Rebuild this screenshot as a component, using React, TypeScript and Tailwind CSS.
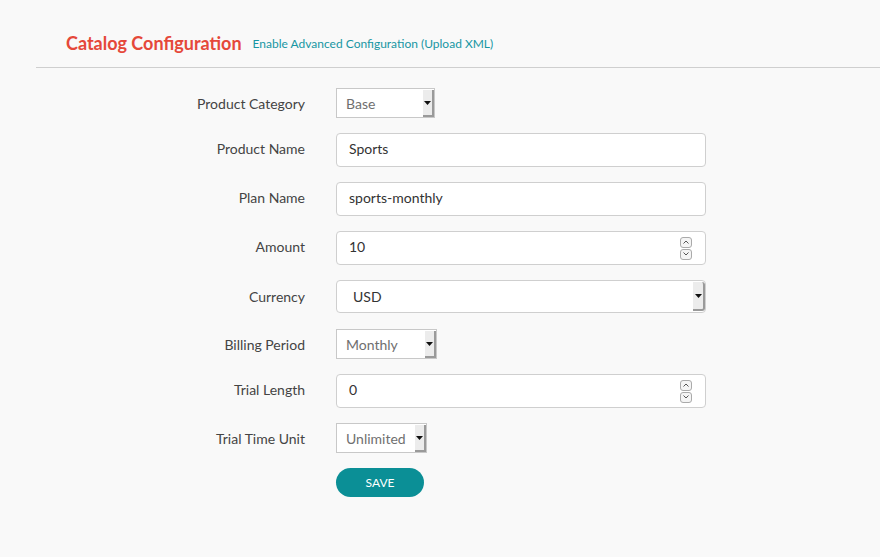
import React from 'react';

const Caret = () => (
  <svg width="7" height="4" viewBox="0 0 7 4" className="block">
    <path d="M0 0 L7 0 L3.5 4 Z" fill="#111" />
  </svg>
);

const SelectBox: React.FC<{ value: string; width: string }> = ({ value, width }) => (
  <div className={`flex h-[30px] ${width} items-stretch border border-[#c8c8c8] bg-white`}>
    <div className="flex flex-1 items-center pl-[9px] text-[14px] text-[#6f6f6f]">{value}</div>
    <div className="flex w-[11px] items-center justify-center border-r-2 border-b-2 border-[#9a9a9a] bg-[#ececec] mt-[1px]">
      <Caret />
    </div>
  </div>
);

const Spinner = () => (
  <div className="flex flex-col gap-[1px]">
    <div className="flex h-[11px] w-[12px] items-center justify-center rounded-[3px] border border-[#aaa] bg-[#f4f4f4]">
      <svg width="6" height="4" viewBox="0 0 6 4">
        <path d="M0.5 3.5 L3 1 L5.5 3.5" fill="none" stroke="#555" strokeWidth="1" />
      </svg>
    </div>
    <div className="flex h-[11px] w-[12px] items-center justify-center rounded-[3px] border border-[#aaa] bg-[#f4f4f4]">
      <svg width="6" height="4" viewBox="0 0 6 4">
        <path d="M0.5 0.5 L3 3 L5.5 0.5" fill="none" stroke="#555" strokeWidth="1" />
      </svg>
    </div>
  </div>
);

const TextInput: React.FC<{ value: string; spin?: boolean }> = ({ value, spin }) => (
  <div className="flex h-[34px] w-[370px] items-center justify-between rounded-[4px] border border-[#cfcfcf] bg-white pl-[12px] pr-[13px] text-[14px] text-[#333]">
    <span className="mb-[4px]">{value}</span>
    {spin && <Spinner />}
  </div>
);

const Row: React.FC<{ label: string; h: string; mb: string; lift?: boolean; children: React.ReactNode }> = ({
  label,
  h,
  mb,
  lift,
  children,
}) => (
  <div className={`flex items-center ${h} ${mb}`}>
    <label className={`w-[305px] text-right text-[14px] text-[#444] ${lift ? 'mb-[4px]' : ''}`}>{label}</label>
    <div className="ml-[31px]">{children}</div>
  </div>
);

export default function App() {
  return (
    <div className="min-h-[557px] w-[880px] bg-[#f9f9f9] font-['Lato',sans-serif]">
      <div className="ml-[36px] flex items-end border-b border-[#cfcfcf] pb-[12px] pl-[30px] pt-[31px]">
        <h1 className="text-[18px] font-bold leading-[24px] text-[#e5483a]">Catalog Configuration</h1>
        <a className="mb-[2px] ml-[11px] text-[12px] text-[#1796a3]">Enable Advanced Configuration (Upload XML)</a>
      </div>

      <div className="pt-[20px]">
        <Row label="Product Category" h="h-[30px]" mb="mb-[15px]">
          <SelectBox value="Base" width="w-[99px]" />
        </Row>
        <Row label="Product Name" h="h-[34px]" mb="mb-[15px]" lift>
          <TextInput value="Sports" />
        </Row>
        <Row label="Plan Name" h="h-[34px]" mb="mb-[15px]" lift>
          <TextInput value="sports-monthly" />
        </Row>
        <Row label="Amount" h="h-[34px]" mb="mb-[15px]" lift>
          <TextInput value="10" spin />
        </Row>
        <Row label="Currency" h="h-[33px]" mb="mb-[16px]">
          <div className="flex h-[33px] w-[370px] items-stretch rounded-[4px] border border-[#cfcfcf] bg-white">
            <div className="flex flex-1 items-center pl-[16px] text-[14px] text-[#333]">USD</div>
            <div className="my-[1px] flex w-[12px] items-center justify-center rounded-r-[3px] border-r-2 border-b-2 border-[#9a9a9a] bg-[#ececec]">
              <Caret />
            </div>
          </div>
        </Row>
        <Row label="Billing Period" h="h-[30px]" mb="mb-[15px]">
          <SelectBox value="Monthly" width="w-[101px]" />
        </Row>
        <Row label="Trial Length" h="h-[34px]" mb="mb-[15px]" lift>
          <TextInput value="0" spin />
        </Row>
        <Row label="Trial Time Unit" h="h-[30px]" mb="mb-[15px]">
          <SelectBox value="Unlimited" width="w-[91px]" />
        </Row>
        <div className="ml-[336px]">
          <button className="h-[29px] w-[88px] rounded-full bg-[#0b8f96] pt-[1px] text-[12px] text-white">SAVE</button>
        </div>
      </div>
    </div>
  );
}
